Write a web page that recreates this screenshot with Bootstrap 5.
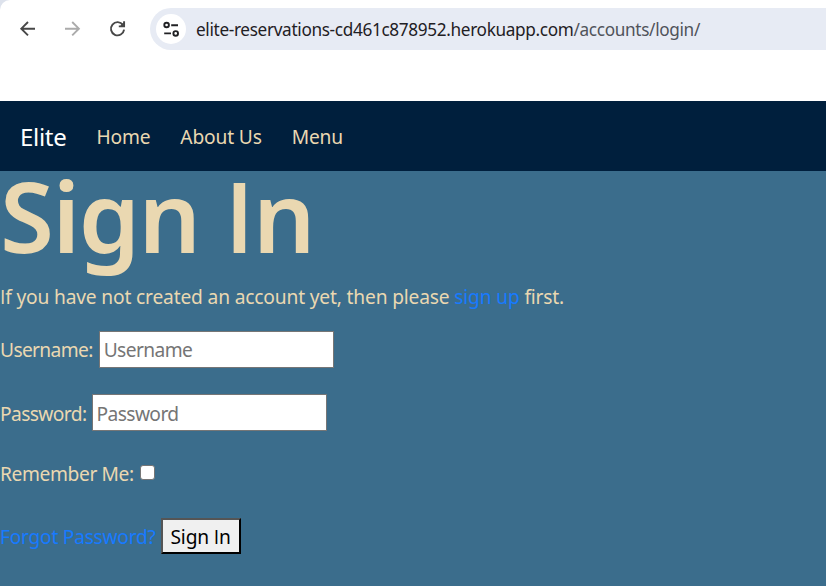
<!DOCTYPE html>
<html lang="en">
<head>
<meta charset="utf-8">
<meta name="viewport" content="width=device-width, initial-scale=1">
<title>Sign In</title>
<link href="https://cdn.jsdelivr.net/npm/bootstrap@5.3.0/dist/css/bootstrap.min.css" rel="stylesheet">
<style>
body{font-family:"Segoe UI","Noto Sans","Open Sans",sans-serif;font-size:19.2px;line-height:30px;background:#3b6d8c;color:#ead8b1;overflow:hidden;height:586px;white-space:nowrap;letter-spacing:-.17px}
a{text-decoration:none;color:#177aff}
.browser-frame{background:#dde2ec}
.browser-bar{height:101px;background:#fff;border-top-left-radius:10px;padding:8px 0 0 18px}
.tool{width:20px;height:20px;margin-right:25px;flex:none}
.omnibox{height:42px;background:#e7ebf4;border-radius:21px 0 0 21px;margin-left:-3px;padding-left:6px;font-size:17.2px;letter-spacing:-.34px;color:#1f2024}
.address{padding-top:1px}
.site-info{width:30px;height:30px;flex:none;margin-right:10px}
.path-part{color:#50535a}
.site-nav{height:70px;background:#001f3d;padding:2px 0 0 20px}
.site-nav .navbar-brand{font-size:24px;margin-right:30px;color:#fff;line-height:36px;letter-spacing:-.3px}
.site-nav .navbar-nav .nav-link{color:#ead8b1;padding:0;margin-right:30px}
.page-title{font-size:98px;font-weight:600;line-height:88px;height:111px;letter-spacing:-1.5px}
.plain-i{font-family:"Segoe UI","Open Sans",sans-serif}
.page-title .plain-i{margin-left:1px}
.field-row{height:37px;gap:6px}
.user-row{margin-top:19px}
.user-row label{letter-spacing:-.65px}
.pass-row{margin-top:26px;gap:5px}
.pass-row label{letter-spacing:-.6px;padding-top:2px}
.pass-row .text-field{padding-top:3px}
.keep-row{margin-top:28px;height:30px;gap:6px}
.keep-row label{letter-spacing:-.38px}
.action-row{margin-top:29px;height:36px;gap:5px}
.action-row a{letter-spacing:-.26px;padding-top:2px}
.text-field{width:235px;height:37px;border:1px solid #767676;border-radius:0;padding:1px 4px;background:#fff;color:#212529;letter-spacing:-.6px}
.text-field::placeholder{color:#757575;opacity:1}
.check-box{width:15px;height:15px;border:1px solid #767676;border-radius:3px;background:#fff;appearance:none;margin-top:-4px}
.submit-btn{width:80px;height:36px;border:2px solid #000;border-top-color:#555;border-left-color:#555;background:#f0f0f0;color:#000;padding:2px 0 0;letter-spacing:inherit}
</style>
<script src="https://cdn.jsdelivr.net/npm/bootstrap@5.3.0/dist/js/bootstrap.bundle.min.js"></script>
</head>
<body>
<div class="browser-frame">
<div class="browser-bar">
  <div class="d-flex align-items-center w-100">
    <svg class="tool" viewBox="0 0 20 20" fill="none" stroke="#474747" stroke-width="1.9"><path d="M17 9.7H3.5M10 3L3.3 9.7L10 16.4"/></svg>
    <svg class="tool" viewBox="0 0 20 20" fill="none" stroke="#ababab" stroke-width="1.9"><path d="M2 9.7H15.7M9.2 3L15.9 9.7L9.2 16.4"/></svg>
    <svg class="tool" viewBox="0 0 20 20" fill="none" stroke="#474747" stroke-width="1.9"><path d="M15 6A6.6 6.6 0 1 0 16.1 10.7M16.1 2.3V7.4H10.8M13.2 7L15.8 4.4"/></svg>
    <div class="omnibox d-flex align-items-center flex-grow-1">
      <svg class="site-info" viewBox="0 0 30 30" fill="none" stroke="#202124" stroke-width="1.9"><circle cx="15" cy="15" r="15" fill="#fff" stroke="none"/><circle cx="10.6" cy="11" r="2.3"/><path d="M15.2 11.2H22M8.2 19.4H15"/><circle cx="19.7" cy="19.4" r="2.3"/></svg>
      <span class="address">elite-reservations-cd461c878952.herokuapp.com<span class="path-part">/accounts/login/</span></span>
    </div>
  </div>
</div>
</div>
<nav class="site-nav navbar navbar-expand justify-content-start">
  <a class="navbar-brand" href="#">Elite</a>
  <div class="navbar-nav">
    <a class="nav-link" href="#">Home</a>
    <a class="nav-link" href="#">About Us</a>
    <a class="nav-link" href="#">Menu</a>
  </div>
</nav>
<main>
  <h1 class="page-title m-0">Sign <span class="plain-i">I</span>n</h1>
  <p class="m-0"><span class="plain-i">I</span>f you have not created an account yet, then please <a href="#">sign up</a> first.</p>
  <form>
    <div class="field-row user-row d-flex align-items-center"><label for="user">Username:</label><input id="user" class="text-field" type="text" placeholder="Username"></div>
    <div class="field-row pass-row d-flex align-items-center"><label for="pass">Password:</label><input id="pass" class="text-field" type="password" placeholder="Password"></div>
    <div class="keep-row d-flex align-items-center"><label for="keep">Remember Me:</label><input id="keep" class="check-box" type="checkbox"></div>
    <div class="action-row d-flex align-items-center"><a href="#">Forgot Password?</a><button class="submit-btn" type="button">Sign <span class="plain-i">I</span>n</button></div>
  </form>
</main>
</body>
</html>
